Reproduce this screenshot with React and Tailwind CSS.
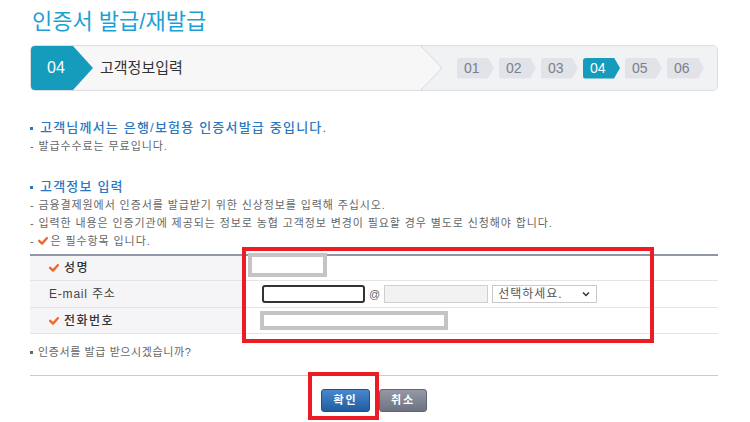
import React from 'react';

const steps = ['01', '02', '03', '04', '05', '06'];

function Check() {
  return (
    <svg width="10" height="8" viewBox="0 0 10 8" className="shrink-0">
      <path d="M1.2 3.8l2.8 2.8L8.8 1.2" stroke="#ec6a2c" strokeWidth="2.4" fill="none" strokeLinecap="round" strokeLinejoin="round" />
    </svg>
  );
}

function Bullet({ children }) {
  return (
    <div className="flex items-center leading-[18px] text-[13px] font-medium text-[#2a78c2] tracking-[1.2px]">
      <span className="inline-block w-[3px] h-[3px] bg-[#2a78c2] mr-[7px]" />
      {children}
    </div>
  );
}

function Note({ children }) {
  return <div className="flex items-center leading-[18px] text-[11px] text-[#666] tracking-[0.9px]">{children}</div>;
}

function StepBar() {
  return (
    <div className="mt-[8px] h-[46px] flex border border-[#dcdde2] rounded-[5px] bg-[#f7f7f8] overflow-hidden">
      <div className="w-[63px] h-full shrink-0 bg-[#159bbb] flex items-center pl-[16px] text-white text-[16px] [clip-path:polygon(0_0,42px_0,62px_50%,42px_100%,0_100%)]">
        04
      </div>
      <div className="flex-1 flex items-center pl-[6px] text-[15px] text-[#333]">고객정보입력</div>
      <svg width="22" height="44" viewBox="0 0 22 44" className="shrink-0">
        <path d="M0 0 L21 22 L0 44 L22 44 L22 0 Z" fill="#f1f2f4" />
        <path d="M0 0 L21 22 L0 44" stroke="#d6d8dd" strokeWidth="1" fill="none" />
      </svg>
      <div className="w-[274px] bg-[#f1f2f4] flex items-center gap-[5px] pl-[14px]">
        {steps.map((s) => (
          <div
            key={s}
            className={
              s === '04'
                ? 'w-[37px] h-[21px] rounded-l-[3px] bg-[#159bbb] text-white text-[14px] flex items-center pl-[7px] [clip-path:polygon(0_0,31px_0,37px_50%,31px_100%,0_100%)]'
                : 'w-[37px] h-[21px] rounded-l-[3px] bg-[#e1e3e9] text-[#7a7f8b] text-[14px] flex items-center pl-[7px] [clip-path:polygon(0_0,31px_0,37px_50%,31px_100%,0_100%)]'
            }
          >
            {s}
          </div>
        ))}
      </div>
    </div>
  );
}

export default function App() {
  return (
    <div className="relative w-[750px] h-[422px] bg-white overflow-hidden [font-family:'Liberation_Sans','Noto_Sans_CJK_KR',sans-serif]">
      <div className="ml-[30px] w-[688px]">
        <h1 className="pt-[7px] pl-[2px] text-[22px] leading-[30px] font-normal text-[#1c9fd7]">인증서 발급/재발급</h1>

        <StepBar />

        <div className="mt-[28px]">
          <Bullet>고객님께서는 은행/보험용 인증서발급 중입니다.</Bullet>
          <Note>- 발급수수료는 무료입니다.</Note>
        </div>

        <div className="mt-[23px]">
          <Bullet>고객정보 입력</Bullet>
          <Note>- 금융결제원에서 인증서를 발급받기 위한 신상정보를 입력해 주십시오.</Note>
          <Note>- 입력한 내용은 인증기관에 제공되는 정보로 농협 고객정보 변경이 필요할 경우 별도로 신청해야 합니다.</Note>
          <Note>
            <span>-</span>
            <span className="mx-[3px]"><Check /></span>
            <span>은 필수항목 입니다.</span>
          </Note>
        </div>

        <div className="mt-[4px] border-t-2 border-[#8e96a8] text-[12px] text-[#333]">
          <div className="grid grid-cols-[213px_1fr] h-[25px] border-b border-[#e3e4e8]">
            <div className="bg-[#f5f5f7] flex items-center gap-[5px] pl-[19px] font-medium tracking-[1.5px]">
              <Check />
              성명
            </div>
            <div className="flex items-center pl-[5px]">
              <div className="w-[79px] h-[24px] -mt-[6px] border-4 border-[#c4c4c4] bg-white" />
            </div>
          </div>
          <div className="grid grid-cols-[213px_1fr] h-[27px] border-b border-[#e3e4e8]">
            <div className="bg-[#f5f5f7] flex items-center pl-[19px] text-[#444] tracking-[0.8px]">E-mail 주소</div>
            <div className="flex items-center pl-[19px]">
              <div className="w-[103px] h-[18px] border-2 border-[#333] rounded-[3px] bg-white" />
              <span className="mx-[4px] text-[11px] text-[#666]">@</span>
              <div className="w-[104px] h-[18px] border border-[#cfcfcf] bg-[#f2f2f2]" />
              <div className="ml-[4px] w-[105px] h-[18px] border border-[#c9c9c9] bg-white flex items-center justify-between pl-[5px] pr-[6px] text-[12px] text-[#555] tracking-[1px]">
                선택하세요.
                <svg width="8" height="6" viewBox="0 0 8 6">
                  <path d="M1 1.5l3 3 3-3" stroke="#333" strokeWidth="1.5" fill="none" />
                </svg>
              </div>
            </div>
          </div>
          <div className="grid grid-cols-[213px_1fr] h-[26px] border-b border-[#e3e4e8]">
            <div className="bg-[#f5f5f7] flex items-center gap-[5px] pl-[19px] font-medium tracking-[1.5px]">
              <Check />
              전화번호
            </div>
            <div className="flex items-center pl-[17px]">
              <div className="w-[188px] h-[19px] border-4 border-[#c4c4c4] bg-white" />
            </div>
          </div>
        </div>

        <div className="mt-[9px] flex items-center leading-[18px] text-[11px] text-[#666] tracking-[0.6px]">
          <span className="inline-block w-[3px] h-[3px] bg-[#666] mr-[5px]" />
          인증서를 발급 받으시겠습니까?
        </div>

        <div className="mt-[14px] h-px bg-[#c9ccd2]" />

        <div className="mt-[13px] flex justify-center gap-[9px]">
          <button className="w-[49px] h-[23px] rounded-[3px] border border-[#1d4f8a] bg-gradient-to-b from-[#4a88cb] to-[#1f5ca0] text-white text-[11px] font-bold tracking-[2px]">
            확인
          </button>
          <button className="w-[48px] h-[23px] rounded-[3px] border border-[#5f6572] bg-gradient-to-b from-[#9499a5] to-[#6d7381] text-white text-[11px] font-bold tracking-[2px]">
            취소
          </button>
        </div>
      </div>

      <div className="absolute left-[242px] top-[247px] w-[412px] h-[96px] border-4 border-[#ed1c24]" />
      <div className="absolute left-[308px] top-[372px] w-[71px] h-[48px] border-4 border-[#ed1c24]" />
    </div>
  );
}
